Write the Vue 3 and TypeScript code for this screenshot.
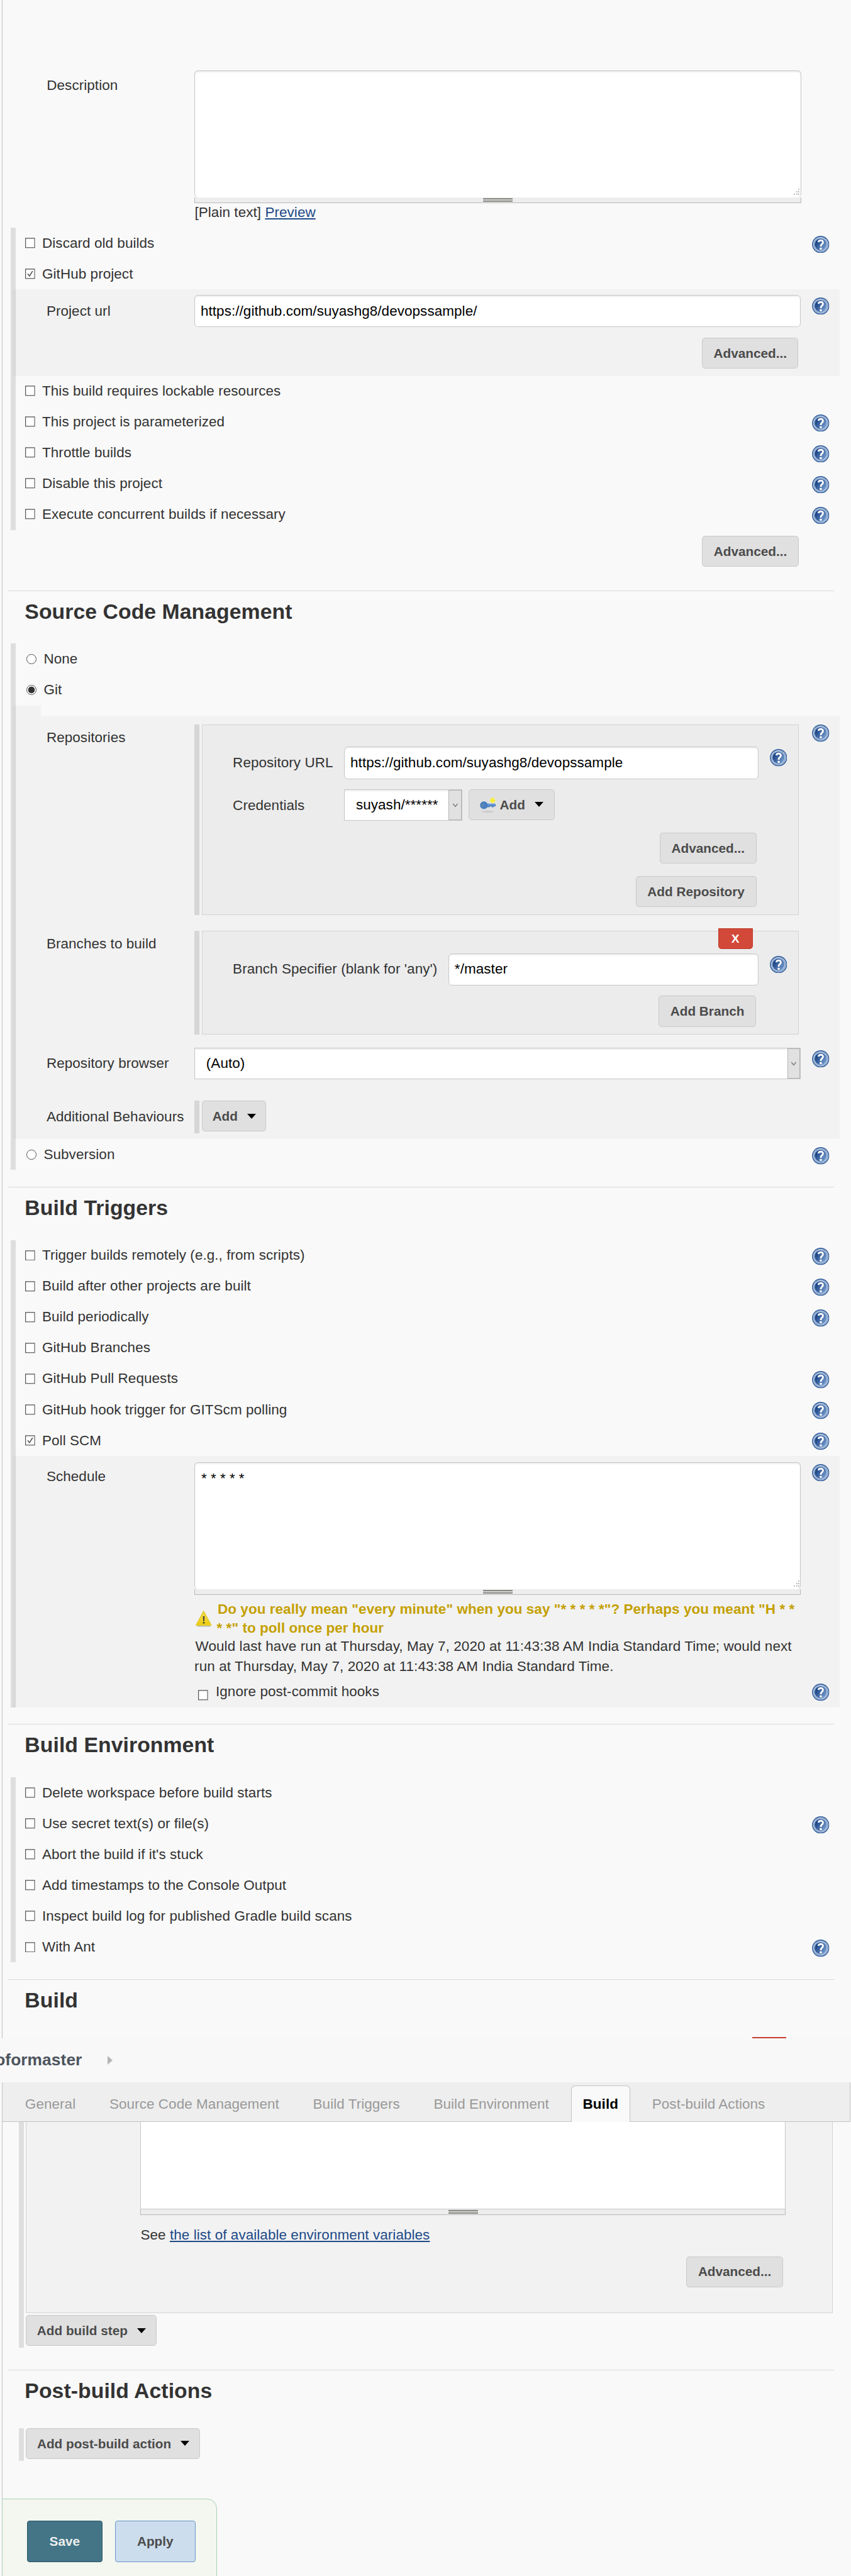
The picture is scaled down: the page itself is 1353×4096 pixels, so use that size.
<script setup lang="ts">
interface Option {
  label: string
  help?: boolean
  checked?: boolean
}

const generalTop: Option[] = [
  { label: 'Discard old builds', help: true },
  { label: 'GitHub project', checked: true },
]
const generalBottom: Option[] = [
  { label: 'This build requires lockable resources' },
  { label: 'This project is parameterized', help: true },
  { label: 'Throttle builds', help: true },
  { label: 'Disable this project', help: true },
  { label: 'Execute concurrent builds if necessary', help: true },
]
const scmTop: Option[] = [{ label: 'None' }, { label: 'Git', checked: true }]
const scmBottom: Option[] = [{ label: 'Subversion', help: true }]
const triggers: Option[] = [
  { label: 'Trigger builds remotely (e.g., from scripts)', help: true },
  { label: 'Build after other projects are built', help: true },
  { label: 'Build periodically', help: true },
  { label: 'GitHub Branches' },
  { label: 'GitHub Pull Requests', help: true },
  { label: 'GitHub hook trigger for GITScm polling', help: true },
  { label: 'Poll SCM', help: true, checked: true },
]
const environment: Option[] = [
  { label: 'Delete workspace before build starts' },
  { label: 'Use secret text(s) or file(s)', help: true },
  { label: "Abort the build if it's stuck" },
  { label: 'Add timestamps to the Console Output' },
  { label: 'Inspect build log for published Gradle build scans' },
  { label: 'With Ant', help: true },
]
const tabs = ['General', 'Source Code Management', 'Build Triggers', 'Build Environment', 'Build', 'Post-build Actions']
const activeTab = 'Build'
</script>

<template>
  <main class="page">
    <svg class="defs" width="0" height="0" aria-hidden="true">
      <defs>
        <linearGradient id="helpFill" x1="0" y1="0.2" x2="1" y2="0.8">
          <stop offset="0.15" stop-color="#1d4687" />
          <stop offset="1" stop-color="#7ba1d2" />
        </linearGradient>
        <linearGradient id="warnFill" x1="0" y1="0" x2="0" y2="1">
          <stop offset="0" stop-color="#f7e36a" />
          <stop offset="1" stop-color="#eccb08" />
        </linearGradient>
        <symbol id="help" viewBox="0 0 28 28">
          <circle cx="14" cy="14" r="13.9" fill="#34609d" />
          <circle cx="14" cy="14" r="12.3" fill="#d3dfef" />
          <circle cx="14" cy="14" r="11.3" fill="#557db5" />
          <circle cx="14" cy="14" r="10.6" fill="#d3dfef" />
          <circle cx="14" cy="14" r="9.8" fill="url(#helpFill)" />
          <path d="M10.4 10.2 Q10.8 7.3 14.2 7.3 Q17.8 7.4 17.7 10.5 Q17.6 12.3 15.7 13.6 Q14.2 14.6 14.2 17.4" fill="none" stroke="#fff" stroke-width="2.9" />
          <rect x="12.5" y="19" width="3.4" height="3.4" rx="0.8" fill="#fff" />
        </symbol>
        <symbol id="check" viewBox="0 0 16 17">
          <rect x="0.6" y="0.9" width="14.8" height="15.2" fill="#fff" stroke="#555" stroke-width="1.3" />
        </symbol>
      </defs>
    </svg>

    <section class="part general">
      <div class="field description">
        <label>Description</label>
        <div class="area-wrap">
          <textarea readonly></textarea>
          <svg class="corner" viewBox="0 0 12 12"><path d="M9 0h2v2H9zM6 4h2v2H6zM9 4h2v2H9zM2 8h2v2H2zM6 8h2v2H6zM9 8h2v2H9z" fill="#bbb" /></svg>
          <div class="grip"><i></i></div>
        </div>
      </div>
      <p class="preview">[Plain text] <a>Preview</a></p>
      <div class="group">
        <div v-for="o in generalTop" :key="o.label" class="row">
          <svg class="box" viewBox="0 0 16 17"><use href="#check" /><path v-if="o.checked" d="M4 8.5l3 3.6 5-8" fill="none" stroke="#555" stroke-width="1.6" /></svg>
          <span>{{ o.label }}</span>
          <svg v-if="o.help" class="help"><use href="#help" /></svg>
        </div>
        <div class="panel url-panel">
          <div class="field">
            <label>Project url</label>
            <input class="wide" value="https://github.com/suyashg8/devopssample/" readonly />
            <svg class="help"><use href="#help" /></svg>
          </div>
          <button class="btn adv">Advanced...</button>
        </div>
        <div class="lifted">
          <div v-for="o in generalBottom" :key="o.label" class="row">
            <svg class="box"><use href="#check" /></svg>
            <span>{{ o.label }}</span>
            <svg v-if="o.help" class="help"><use href="#help" /></svg>
          </div>
        </div>
      </div>
      <button class="btn adv outer">Advanced...</button>
    </section>

    <section class="part ruled scm">
      <h2>Source Code Management</h2>
      <div class="group">
        <div v-for="o in scmTop" :key="o.label" class="row radio">
          <i class="dot" :class="{ on: o.checked }"></i>
          <span>{{ o.label }}</span>
        </div>
        <div class="step"></div>
        <div class="panel git-panel">
          <div class="field repos">
            <label>Repositories</label>
            <div class="nest repo-nest">
              <div class="sub url-line">
                <label>Repository URL</label>
                <input value="https://github.com/suyashg8/devopssample" readonly />
                <svg class="help"><use href="#help" /></svg>
              </div>
              <div class="sub cred-line">
                <label>Credentials</label>
                <div class="select cred"><span>suyash/******</span><b><svg viewBox="0 0 12 8"><path d="M1.5 1l4.5 5.5L10.5 1" fill="none" stroke="#777" stroke-width="1.6" /></svg></b></div>
                <button class="btn key-btn">
                  <svg class="key" viewBox="0 0 27 27">
                    <ellipse cx="12.500" cy="25" rx="10" ry="1.600" fill="#cbcbcb" />
                    <path d="M10 12h14.500l1 1.500v3h-3.500v1.500h-3v-1.500h-3v1.200h-6z" fill="#5286c6" />
                    <path d="M12 13.200h13" stroke="#86aede" stroke-width="1.200" />
                    <circle cx="6.500" cy="14.600" r="6.300" fill="#4a80c2" />
                    <circle cx="4.500" cy="14.600" r="1.700" fill="#7d8794" />
                    <circle cx="20.500" cy="6.800" r="4.400" fill="#f7f17a" />
                    <path d="M20.500 1.800l1.600 3.400 3.400 1.600-3.400 1.600-1.600 3.400-1.600-3.400-3.400-1.600 3.400-1.600z" fill="#f4ec2e" />
                  </svg>
                  <span>Add</span><i class="caret"></i>
                </button>
              </div>
              <button class="btn nest-adv">Advanced...</button>
              <button class="btn nest-repo">Add Repository</button>
            </div>
            <svg class="help"><use href="#help" /></svg>
          </div>
          <div class="field branches">
            <label>Branches to build</label>
            <div class="nest branch-nest">
              <button class="remove">X</button>
              <div class="sub branch-line">
                <label>Branch Specifier (blank for 'any')</label>
                <input value="*/master" readonly />
                <svg class="help"><use href="#help" /></svg>
              </div>
              <button class="btn nest-branch">Add Branch</button>
            </div>
          </div>
          <div class="field browser">
            <label>Repository browser</label>
            <div class="select auto"><span>(Auto)</span><b><svg viewBox="0 0 12 8"><path d="M1.500 1l4.500 5.500L10.500 1" fill="none" stroke="#777" stroke-width="1.600" /></svg></b></div>
            <svg class="help"><use href="#help" /></svg>
          </div>
          <div class="field behaviours">
            <label>Additional Behaviours</label>
            <div class="handle"><button class="btn add-b"><span>Add</span><i class="caret"></i></button></div>
          </div>
        </div>
        <div v-for="o in scmBottom" :key="o.label" class="row radio">
          <i class="dot"></i>
          <span>{{ o.label }}</span>
          <svg class="help"><use href="#help" /></svg>
        </div>
      </div>
    </section>

    <section class="part ruled trig">
      <h2>Build Triggers</h2>
      <div class="group">
        <div v-for="o in triggers" :key="o.label" class="row">
          <svg class="box" viewBox="0 0 16 17"><use href="#check" /><path v-if="o.checked" d="M4 8.500l3 3.600 5-8" fill="none" stroke="#555" stroke-width="1.600" /></svg>
          <span>{{ o.label }}</span>
          <svg v-if="o.help" class="help"><use href="#help" /></svg>
        </div>
        <div class="panel poll-panel">
          <div class="field schedule">
            <label>Schedule</label>
            <div class="area-wrap">
              <textarea readonly>* * * * *</textarea>
              <svg class="corner" viewBox="0 0 12 12"><path d="M9 0h2v2H9zM6 4h2v2H6zM9 4h2v2H9zM2 8h2v2H2zM6 8h2v2H6zM9 8h2v2H9z" fill="#bbb" /></svg>
              <div class="grip"><i></i></div>
            </div>
            <svg class="help"><use href="#help" /></svg>
          </div>
          <div class="warning">
            <svg viewBox="0 0 28 28">
              <path d="M4 26h21" stroke="#bbb" stroke-width="2" />
              <path d="M14 2.500L26 24.500H2z" fill="url(#warnFill)" stroke="#e6cc2c" stroke-width="2" stroke-linejoin="round" />
              <path d="M12.800 10h2.800l-.5 8h-1.800z" fill="#4a4630" />
              <circle cx="14.200" cy="20.700" r="1.500" fill="#4a4630" />
            </svg>
            <p><span class="first">Do you really mean "every minute" when you say "* * * * *"? Perhaps you meant "H * *</span><br />* *" to poll once per hour</p>
          </div>
          <p class="next-run"><span class="first">Would last have run at Thursday, May 7, 2020 at 11:43:38 AM India Standard Time; would next</span><br />run at Thursday, May 7, 2020 at 11:43:38 AM India Standard Time.</p>
          <div class="ignore">
            <svg class="box"><use href="#check" /></svg>
            <span>Ignore post-commit hooks</span>
            <svg class="help"><use href="#help" /></svg>
          </div>
        </div>
      </div>
    </section>

    <section class="part ruled env">
      <h2>Build Environment</h2>
      <div class="group">
        <div v-for="o in environment" :key="o.label" class="row">
          <svg class="box"><use href="#check" /></svg>
          <span>{{ o.label }}</span>
          <svg v-if="o.help" class="help"><use href="#help" /></svg>
        </div>
      </div>
    </section>

    <section class="part ruled build-head">
      <h2>Build</h2>
      <div class="red-edge"></div>
    </section>

    <nav class="crumbs"><span>oformaster</span><i></i></nav>

    <div class="tabs">
      <a v-for="t in tabs" :key="t" :class="{ active: t === activeTab }">{{ t }}</a>
    </div>

    <section class="part build-body">
      <div class="handle tall">
        <div class="step-box">
          <div class="script"></div>
          <div class="grip"><i></i></div>
          <p>See <a>the list of available environment variables</a></p>
          <button class="btn">Advanced...</button>
        </div>
        <button class="btn add-step"><span>Add build step</span><i class="caret"></i></button>
      </div>
    </section>

    <section class="part ruled post">
      <h2>Post-build Actions</h2>
      <div class="handle"><button class="btn add-post"><span>Add post-build action</span><i class="caret"></i></button></div>
    </section>

    <footer class="save-bar">
      <button class="save">Save</button>
      <button class="apply">Apply</button>
    </footer>
  </main>
</template>

<style>
html,
body {
  margin: 0;
  background: #f9f9f9;
  overflow: hidden;
}
</style>

<style scoped>
.page {
  zoom: 0.984;
  width: 1375px;
  height: 4163px;
  overflow: hidden;
  background: #f9f9f9;
  color: #333;
  font-family: 'Liberation Sans', Arial, sans-serif;
  font-size: 22.85px;
  letter-spacing: 0.06px;
  line-height: 30px;
  display: flex;
  flex-direction: column;
}
.page * {
  box-sizing: border-box;
}
.defs {
  position: absolute;
}
p {
  margin: 0;
}
a {
  color: #204a87;
}
p a {
  text-decoration: underline;
  text-decoration-thickness: 2px;
  text-underline-offset: 2px;
}
svg {
  display: block;
  flex: none;
}
.part {
  flex: none;
  margin-left: 3px;
  border-left: 1.1px solid #bfbfbf;
  display: flex;
  flex-direction: column;
}
.ruled::before {
  content: '';
  flex: none;
  height: 1.1px;
  width: 1335px;
  margin-left: 9px;
  background: #dadada;
}
h2 {
  flex: none;
  margin: 13px 0 0 36px;
  height: 40px;
  line-height: 40px;
  font-size: 34.3px;
  white-space: nowrap;
}
.general {
  height: 954px;
  padding-top: 114px;
}
.group {
  flex: none;
  margin-left: 13px;
  width: 1339.5px;
  border-left: 8.2px solid #dedede;
}
.row {
  height: 49.84px;
  display: flex;
  align-items: flex-start;
}
.row span {
  margin: 10px 0 0 11px;
  white-space: nowrap;
}
.row .box,
.box {
  width: 16px;
  height: 17px;
}
.row .box {
  margin: 16.5px 0 0 16px;
}
.help {
  width: 28px;
  height: 28px;
}
.row .help {
  margin: 13px 16.5px 0 auto;
}
.lifted {
  position: relative;
  top: -1px;
}
.dot {
  width: 16px;
  height: 16px;
  margin: 17px 0 0 17.5px;
  border: 1.1px solid #555;
  border-radius: 50%;
  background: #fff;
}
.dot.on {
  background: radial-gradient(circle, #333 0 5px, #fff 5.8px);
}
.radio span {
  margin-left: 12px;
}
.panel {
  position: relative;
  background: #f2f2f2;
}
.panel::before {
  content: '';
  position: absolute;
  left: -4px;
  top: 0;
  bottom: 0;
  width: 4px;
  background: #d8d8d8;
}
.field {
  display: flex;
  align-items: flex-start;
  flex: none;
}
.field > label {
  flex: none;
  width: 289px;
  padding-left: 50px;
  white-space: nowrap;
}
.field > .help {
  margin-left: 18px;
}
.description {
  margin-left: 21.5px;
  height: 214px;
}
.description label {
  margin-top: 9px;
}
.area-wrap {
  position: relative;
  width: 980px;
  height: 214px;
}
textarea {
  display: block;
  width: 100%;
  height: 205px;
  margin: 0;
  padding: 10.5px 10px;
  resize: none;
  overflow: hidden;
  border: 1.1px solid #c6c6c6;
  border-bottom: 0;
  border-radius: 6px;
  box-shadow: inset 0 2px 2px #eee;
  background: #fff;
  font: inherit;
  color: #000;
}
.corner {
  position: absolute;
  right: 2px;
  bottom: 11px;
  width: 12px;
  height: 12px;
}
.grip {
  height: 9.5px;
  background: #ededed;
  border: 1.1px solid #b9b9b9;
  border-top: 0;
  display: flex;
  justify-content: center;
  align-items: flex-start;
}
.grip i {
  width: 48px;
  height: 6.2px;
  margin-top: 1.5px;
  border-top: 2.1px solid #8a8a86;
  border-bottom: 2.1px solid #8a8a86;
  background: #d0d0cc;
}
.preview {
  margin: 0 0 10px 310.5px;
  height: 30px;
}
input {
  height: 52px;
  margin: 0;
  padding: 0 9px;
  border: 1.1px solid #c8c8c8;
  border-radius: 6px;
  box-shadow: inset 0 2px 2px #eee;
  background: #fff;
  font: inherit;
  letter-spacing: inherit;
  color: #000;
  outline: none;
}
.wide {
  width: 980px;
}
.url-panel {
  height: 140px;
  padding-top: 9px;
}
.url-panel label {
  margin-top: 11px;
}
.url-panel .help {
  margin-top: 4px;
}
.btn {
  display: flex;
  align-items: center;
  justify-content: center;
  flex: none;
  width: 156px;
  height: 50px;
  margin: 0;
  padding: 0;
  border: 1.1px solid #c9c9c9;
  border-radius: 5px;
  background: #e0e0e0;
  color: #4b4b4b;
  font: bold 21.1px/30px 'Liberation Sans', Arial, sans-serif;
  white-space: nowrap;
}
.adv {
  margin: 17px 0 0 1109px;
}
.adv.outer {
  margin: 9px 0 0 1130.5px;
}
.caret {
  width: 0;
  height: 0;
  border: 7.15px solid transparent;
  border-top: 8.2px solid #000;
  border-bottom: 0;
  margin-left: 15px;
}
.scm {
  height: 963.5px;
}
.scm .group,
.trig .group,
.env .group {
  margin-top: 32px;
}
.step {
  position: relative;
  left: -4px;
  width: 45px;
  height: 18px;
  background: linear-gradient(90deg, #d8d8d8 4px, #f2f2f2 4px);
}
.git-panel {
  height: 683px;
  padding-top: 13px;
}
.repos {
  height: 333px;
}
.repos > label,
.branches > label {
  margin-top: 6px;
}
.nest {
  position: relative;
  border: 1.1px solid #d3d3d3;
  margin-left: 12px;
  width: 965px;
  background: #ececec;
  padding-left: 49px;
}
.nest::before {
  content: '';
  position: absolute;
  left: -13px;
  top: -1px;
  bottom: -1px;
  width: 8px;
  background: #d6d6d6;
}
.repo-nest {
  height: 308px;
  padding-top: 35px;
}
.repos > .help {
  margin-left: 21px;
}
.sub {
  display: flex;
  align-items: flex-start;
}
.sub > label {
  flex: none;
  width: 180px;
  margin-top: 11px;
  white-space: nowrap;
}
.url-line input {
  width: 669.5px;
}
.sub .help {
  margin: 4px 0 0 18px;
}
.cred-line {
  margin-top: 16.5px;
}
.select {
  display: flex;
  justify-content: space-between;
  align-items: center;
  height: 51.5px;
  border: 1.1px solid #c6c6c6;
  background: #fff;
  box-shadow: inset 0 2px 2px #eee;
  color: #000;
}
.select span {
  padding-left: 18px;
}
.select b {
  width: 21px;
  height: 49px;
  border: 1.1px solid #b3b3b3;
  background: #e1e1e1;
  display: flex;
  align-items: center;
  justify-content: center;
}
.select svg {
  width: 10px;
  height: 7px;
}
.cred {
  width: 191px;
}
.auto {
  width: 980px;
}
.key-btn {
  width: 139px;
  margin-left: 10px;
}
.key {
  width: 27px;
  height: 27px;
  margin-right: 5px;
}
.nest-adv {
  margin: 18.5px 0 0 690px;
}
.nest-repo {
  width: 195px;
  margin: 20.5px 0 0 651px;
}
.branch-nest {
  height: 168px;
  padding-top: 35.5px;
}
.remove {
  position: absolute;
  left: 833px;
  top: -5px;
  width: 56px;
  height: 34px;
  padding: 0;
  border: 1.1px solid #c03a2b;
  border-radius: 0 0 5px 5px;
  background: #d24939;
  color: #fff;
  font: bold 19.5px/30px 'Liberation Sans', Arial, sans-serif;
}
.branch-line > label {
  width: 348.5px;
}
.branch-line input {
  width: 501px;
}
.nest-branch {
  width: 157.5px;
  margin: 17px 0 0 688px;
}
.branches {
  height: 189px;
}
.browser {
  height: 87px;
}
.browser > label {
  margin-top: 10.5px;
}
.browser > .help {
  margin-top: 4px;
}
.behaviours {
  position: relative;
  top: -1px;
}
.behaviours > label {
  margin-top: 11px;
}
.handle {
  border-left: 8.2px solid #dedede;
  padding-left: 4px;
  height: 53px;
}
.behaviours .handle {
  border-color: #d6d6d6;
}
.add-b {
  width: 104px;
}
.trig {
  height: 868.5px;
}
.poll-panel {
  height: 407px;
  padding-top: 10.5px;
}
.schedule label {
  margin-top: 8.5px;
}
.schedule .help {
  margin-top: 2.5px;
}
.warning {
  display: flex;
  margin: 8.5px 0 0 289.5px;
  height: 60px;
  color: #c4a000;
  font-weight: bold;
  white-space: nowrap;
}
.warning svg {
  width: 28px;
  height: 28px;
  margin: 16.5px 7.5px 0 0;
}
.first {
  padding-left: 1.5px;
}
.next-run {
  margin-left: 289px;
  line-height: 33px;
  height: 66px;
  margin-top: -1.5px;
  letter-spacing: 0.09px;
  white-space: nowrap;
}
.ignore {
  display: flex;
  align-items: flex-start;
  margin: 7px 0 0 295.5px;
}
.ignore .box {
  margin-top: 14px;
}
.ignore span {
  margin-left: 12px;
  margin-top: 1.5px;
}
.ignore .help {
  margin: 4px 16.5px 0 auto;
}
.env {
  height: 412px;
}
.build-head {
  height: 96px;
}
.red-edge {
  width: 55px;
  height: 2px;
  margin: auto 0 0 1211.5px;
  background: #c93f30;
}
.crumbs {
  flex: none;
  height: 71px;
  display: flex;
  align-items: center;
  background: #f8f8f8;
  color: #4d545d;
  font-weight: bold;
  font-size: 26.8px;
}
.crumbs span {
  margin-left: -8px;
}
.crumbs i {
  margin-left: 41.5px;
  border: 7.2px solid transparent;
  border-left: 8.2px solid #b5b5b5;
  border-right: 0;
}
.tabs {
  flex: none;
  height: 64px;
  margin-left: 3px;
  width: 1371px;
  padding: 5px 0 0 17.5px;
  display: flex;
  background: #eee;
  border: 1.1px solid #c3c3c3;
  border-top: 0;
}
.tabs a {
  height: 59px;
  padding: 14.5px 18px 0;
  margin-right: 16.6px;
  border: 1.1px solid transparent;
  border-bottom: 0;
  color: #999;
  white-space: nowrap;
}
.tabs .active {
  background: #f9f9f9;
  border-color: #c3c3c3;
  border-radius: 7px 7px 0 0;
  color: #000;
  font-weight: bold;
}
.build-body {
  height: 400.5px;
}
.build-body .handle {
  margin-left: 26px;
  height: 365px;
}
.step-box {
  width: 1303px;
  height: 309px;
  border: 1.1px solid #d3d3d3;
  border-top: 0;
  background: #f2f2f2;
  padding-left: 184px;
}
.script {
  width: 1042px;
  height: 141px;
  background: #fff;
  border: 1.1px solid #c6c6c6;
  border-top: 0;
}
.step-box .grip {
  width: 1042px;
}
.step-box p {
  margin-top: 17px;
  height: 49.5px;
}
.step-box .btn {
  margin-left: 882px;
}
.add-step {
  width: 211px;
  margin-top: 3px;
}
.post {
  height: 208px;
}
.post .handle {
  margin: 40px 0 0 26px;
}
.add-post {
  width: 281.5px;
}
.save-bar {
  flex: none;
  width: 348px;
  height: 140px;
  margin-left: 3px;
  padding: 35px 0 0 39.5px;
  display: flex;
  gap: 20px;
  background: #f4f7f0;
  border: 1.1px solid #a9cfb9;
  border-radius: 0 16px 0 0;
}
.save-bar button {
  height: 67px;
  width: 122px;
  border: 1.1px solid #2b5667;
  border-radius: 4px;
  background: #437587;
  color: #eee;
  font: bold 21.1px/30px 'Liberation Sans', Arial, sans-serif;
}
.save-bar .apply {
  width: 130.5px;
  border-color: #6696cc;
  background: #ccdded;
  color: #4b4b4b;
}
</style>
